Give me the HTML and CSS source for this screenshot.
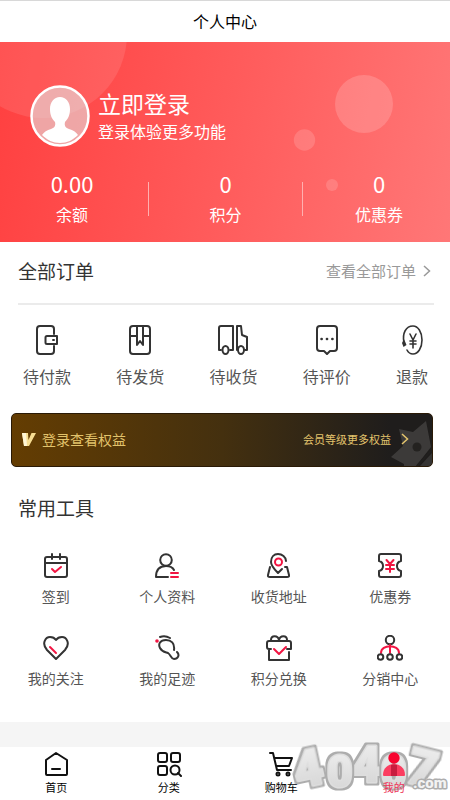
FILE: index.html
```html
<!DOCTYPE html>
<html lang="zh-CN">
<head>
<meta charset="utf-8">
<meta name="viewport" content="width=device-width, initial-scale=1">
<title>个人中心</title>
<link rel="stylesheet" href="styles.css">
</head>
<body>
<div class="page">
  <header class="topbar"><h1>个人中心</h1></header>

  <section class="hero">
    <svg class="bubbles" viewBox="0 0 450 200" preserveAspectRatio="xMidYMin slice" aria-hidden="true">
      <g fill="#fff">
        <circle cx="43" cy="-8" r="84" opacity=".1"/>
        <circle cx="364" cy="62" r="29" opacity=".17"/>
        <circle cx="304.500" cy="98" r="10.700" opacity=".15"/>
        <circle cx="332" cy="143" r="6" opacity=".15"/>
      </g>
    </svg>
    <a class="login" href="#">
      <svg class="avatar" viewBox="0 0 60 62" aria-hidden="true">
        <ellipse cx="30" cy="31" rx="28.500" ry="29.500" fill="#e4e4e4" fill-opacity=".6" stroke="#fff" stroke-width="2.500"/>
        <path d="M30 12c-6 0-10 5-10 12 0 6 2 10 5 13 1 4-1 6-4 7-4 1-7 3-9 6 5 5 11 8 18 8s13-3 18-8c-2-3-5-5-9-6-3-1-5-3-4-7 3-3 5-7 5-13 0-7-4-12-10-12z" fill="#fff"/>
      </svg>
      <span class="login-text">
        <strong>立即登录</strong>
        <span>登录体验更多功能</span>
      </span>
    </a>
    <div class="stats">
      <div class="stat"><b>0.00</b><span>余额</span></div>
      <i class="rule"></i>
      <div class="stat"><b>0</b><span>积分</span></div>
      <i class="rule"></i>
      <div class="stat"><b>0</b><span>优惠券</span></div>
    </div>
  </section>

  <section class="orders">
    <div class="orders-head">
      <h2>全部订单</h2>
      <a href="#">查看全部订单
        <svg class="chevron" viewBox="0 0 8 12" aria-hidden="true"><path d="M1 1l5.500 5L1 11"/></svg>
      </a>
    </div>
    <nav class="order-list">
      <a href="#">
        <svg class="ico" viewBox="0 0 30 30" aria-hidden="true"><path d="M22 9V4q0-3-3-3H8Q5 1 5 4v22q0 3 3 3h11q3 0 3-3v-5"/><path d="M15 11h10v8H15q-1.500 0-1.500-1.500v-5Q13.500 11 15 11z"/><path d="M21 15h1"/></svg>
        <span>待付款</span>
      </a>
      <a href="#">
        <svg class="ico" viewBox="0 0 30 30" aria-hidden="true"><rect x="5" y="1" width="20" height="28" rx="3"/><path d="M5 11h7m6 0h7M12 1v19l3-4 3 4V1"/></svg>
        <span>待发货</span>
      </a>
      <a href="#">
        <svg class="ico" viewBox="0 0 30 30" aria-hidden="true"><path d="M3 25H1V3q0-2 2-2h12v24h-3M19 25V1h4l1 9 5 2v13h-2"/><ellipse cx="7.500" cy="25" rx="3" ry="4"/><ellipse cx="23" cy="25" rx="3" ry="4"/></svg>
        <span>待收货</span>
      </a>
      <a href="#">
        <svg class="ico" viewBox="0 0 30 30" aria-hidden="true"><path d="M8 1h14q3 0 3 3v19q0 3-3 3h-4l-3 3-3-3H8q-3 0-3-3V4q0-3 3-3z"/><path d="M9.500 14h.2M14.900 14h.2M20.300 14h.2" stroke-width="2.500"/></svg>
        <span>待评价</span>
      </a>
      <a href="#">
        <svg class="ico thin" viewBox="0 0 30 30" aria-hidden="true"><path d="M7 18C5 8 9 1 16 1c5 0 9 6 9 14s-4 14-9 14q-4 0-6-4M13 9l3 6 3-6M13 16h6m-6 3h6m-3-4v8"/><path d="M7 14l2.500 6-3 2-1.500-4z" fill="#333" stroke="none"/></svg>
        <span>退款</span>
      </a>
    </nav>
  </section>

  <a class="vip" href="#">
    <svg class="crown" viewBox="0 0 42 48" aria-hidden="true"><path d="M9 11l14 3L36 3l5 26-15 19H14v-2L1 39l12-11z" fill="#fff" fill-opacity=".13"/><path d="M42 32L27 48" stroke="#211f1e" stroke-width="2"/><path d="M42 35v12l-3 1h-9z" fill="#fff" fill-opacity=".1"/><circle cx="27" cy="29" r="4.500" fill="#242220"/></svg>
    <svg class="vip-v" viewBox="0 0 14 15" aria-hidden="true"><path d="M0 1h6l.5 7L9.500 1H14L7 14H2z" fill="#f7dd92"/><path d="M0 1h4l1 13H2z" fill="#fff6d6"/></svg>
    <span class="vip-title">登录查看权益</span>
    <span class="vip-more">会员等级更多权益</span>
    <svg class="chevron gold" viewBox="0 0 8 12" aria-hidden="true"><path d="M1 1l5.500 5L1 11"/></svg>
  </a>

  <section class="tools">
    <h2>常用工具</h2>
    <nav class="tool-grid">
      <a href="#">
        <svg class="ico" viewBox="0 0 26 26" aria-hidden="true"><rect x="2" y="4" width="22" height="20" rx="2"/><path d="M2 10h22M9 1v5m8-5v5"/><path class="red" d="M9 16l3 3 6-5"/></svg>
        <span>签到</span>
      </a>
      <a href="#">
        <svg class="ico" viewBox="0 0 26 26" aria-hidden="true"><circle cx="12" cy="7" r="5.800"/><path d="M14 24H2q0-11 10-11 6 0 8 4"/><path class="red" d="M17 20h7m-7 4h7"/></svg>
        <span>个人资料</span>
      </a>
      <a href="#">
        <svg class="ico" viewBox="0 0 26 26" aria-hidden="true"><path d="M16 16l-4 4c-5-5-7-8-7-11 0-5 3-8 7-8s8 3 8 7M4 14L2 22q-.5 2 2 2h17q2.500 0 2-2L21 14h-2"/><circle class="red" cx="12.500" cy="9" r="3.500"/></svg>
        <span>收货地址</span>
      </a>
      <a href="#">
        <svg class="ico" viewBox="0 0 26 26" aria-hidden="true"><path d="M4 1h18q2 0 2 2v5q-4 1-4 5t4 5v4q0 2-2 2H4q-2 0-2-2v-4q4-1 4-5T2 8V3q0-2 2-2z"/><path class="red" d="M9.500 7l3.500 4 3.500-4M9 12h8m-8 4h8m-4-5v8"/></svg>
        <span>优惠券</span>
      </a>
      <a href="#">
        <svg class="ico" viewBox="0 0 26 26" aria-hidden="true"><path d="M13 24L4 15C-2 8 3 2 7 2q4 0 6 3 2-3 6-3c4 0 9 6 3 13z"/><path class="red" d="M7 12l6 6"/></svg>
        <span>我的关注</span>
      </a>
      <a href="#">
        <svg class="ico" viewBox="0 0 26 26" aria-hidden="true"><path d="M6 2q5-2 10 1M20 15C21 8 17 5 12 5c-6 0-8 4-6 8 2 4 5 4 8 5 3 2 3 6 6 6 4 0 6-4 3-7"/><circle cx="3" cy="6" r="1.800" fill="#f21542" stroke="none"/></svg>
        <span>我的足迹</span>
      </a>
      <a href="#">
        <svg class="ico" viewBox="0 0 26 26" aria-hidden="true"><path d="M5 14H3q-2 0-2-2V8q0-2 2-2h20q2 0 2 2v6h-4M3 14v11h20v-8M5 5c0-5 7-5 8 0 1-5 8-5 8 0"/><path class="red" d="M8 14l5 5 7-7"/></svg>
        <span>积分兑换</span>
      </a>
      <a href="#">
        <svg class="ico" viewBox="0 0 26 26" aria-hidden="true"><circle cx="13" cy="5" r="4.200"/><path class="red" d="M4 18c0-9 18-9 18 0M13 10v8"/><circle cx="3.500" cy="22" r="2.800"/><circle cx="13" cy="22" r="2.800"/><circle cx="22.500" cy="22" r="2.800"/></svg>
        <span>分销中心</span>
      </a>
    </nav>
  </section>

  <nav class="tabbar">
    <svg class="mark" viewBox="0 0 160 56" aria-label="4o4o7.com" role="img">
      <defs>
        <linearGradient id="silver" x1="0" y1="0" x2="0" y2="1"><stop offset="0" stop-color="#f0f0f0"/><stop offset="1" stop-color="#d2d2d2"/></linearGradient>
        <filter id="rim" x="-20%" y="-20%" width="140%" height="140%">
          <feMorphology in="SourceAlpha" operator="dilate" radius="2" result="fat"/>
          <feFlood flood-color="#adadad"/>
          <feComposite in2="fat" operator="in" result="edge"/>
          <feMerge><feMergeNode in="edge"/><feMergeNode in="SourceGraphic"/></feMerge>
        </filter>
      </defs>
      <g class="mark-big" fill="url(#silver)">
        <text x="4" y="42" transform="rotate(-12 18 26)" filter="url(#rim)">4</text>
        <text x="62" y="38" filter="url(#rim)">4</text>
        <text x="37" y="43" class="mark-o" filter="url(#rim)">0</text>
        <text x="91" y="43" class="mark-o" filter="url(#rim)">0</text>
        <text x="118" y="41" transform="rotate(14 130 24)" filter="url(#rim)">7</text>
      </g>
      <text class="mark-small" x="123" y="44">.com</text>
    </svg>
    <a href="#">
      <svg class="ico" viewBox="0 0 26 26" aria-hidden="true"><path d="M3 9l10-7 11 7v14q0 1-1 1H4q-1 0-1-1zM9 18h8"/></svg>
      <span>首页</span>
    </a>
    <a href="#">
      <svg class="ico" viewBox="0 0 26 26" aria-hidden="true"><rect x="2" y="2" width="9" height="9" rx="2"/><rect x="15" y="2" width="9" height="9" rx="2"/><rect x="2" y="15" width="9" height="9" rx="2"/><circle cx="19" cy="19" r="4.500"/><path d="M22 22l3 3"/></svg>
      <span>分类</span>
    </a>
    <a href="#">
      <svg class="ico" viewBox="0 0 26 26" aria-hidden="true"><path d="M2 2h3l4 17h14M6 7h18l-3 8H9"/><circle cx="10" cy="23" r="1.500"/><circle cx="20" cy="23" r="1.500"/></svg>
      <span>购物车</span>
    </a>
    <a class="active" href="#" aria-current="page">
      <svg class="ico" viewBox="0 0 26 26" aria-hidden="true"><circle cx="13" cy="7" r="5.700" fill="#f7042f" stroke="none"/><path d="M2 24c0-7 5-11 11-11s11 4 11 11q0 1-1 1H3q-1 0-1-1z" fill="#fb3d60" stroke="none"/><path d="M10 14q3-1 6 0v11h-6z" fill="#c81d3f" stroke="none"/></svg>
      <span>我的</span>
    </a>
  </nav>
</div>
</body>
</html>
```

FILE: styles.css
```css
* {
  box-sizing: border-box;
}

body {
  margin: 0;
  background: #fff;
  color: #333;
  font-family: "Noto Sans CJK SC", "Noto Sans", sans-serif;
  font-size: 16px;
  line-height: 20px;
}

a {
  color: inherit;
  text-decoration: none;
}

h1,
h2 {
  margin: 0;
  font-weight: 400;
}

svg {
  display: block;
  flex: none;
}

.page {
  display: flex;
  flex-direction: column;
  min-height: 100vh;
}

.topbar {
  padding: 10px 0 11px;
  border-top: 1px solid #d8d8d8;
  color: #000;
  text-align: center;
}

.topbar h1 {
  font-size: 16px;
}

/* Account summary */
.hero {
  position: relative;
  overflow: hidden;
  padding: 43px 0 18px;
  background: linear-gradient(100deg, #ff4040, #ff5b5b 50%, #ff7777);
  color: #fff;
}

.bubbles {
  position: absolute;
  inset: 0;
  width: 100%;
  height: 100%;
}

.login {
  position: relative;
  display: flex;
  align-items: center;
  gap: 8px;
  padding-left: 30px;
}

.avatar {
  width: 60px;
  height: 62px;
}

.login-text {
  display: flex;
  flex-direction: column;
  gap: 4px;
  padding-bottom: 2px;
}

.login-text strong {
  font-size: 23px;
  font-weight: 400;
  line-height: 28px;
}

.stats {
  position: relative;
  display: flex;
  justify-content: space-between;
  align-items: center;
  margin-top: 22px;
  padding: 0 47px 0 48px;
}

.stat {
  display: flex;
  flex-direction: column;
  align-items: center;
  gap: 7px;
  width: 48px;
}

.stat b {
  font-size: 22px;
  font-weight: 400;
  line-height: 28px;
}

.rule {
  width: 1px;
  height: 34px;
  margin-top: 4px;
  background: #ffb0b0;
}

/* Orders */
.orders-head {
  display: flex;
  justify-content: space-between;
  align-items: center;
  margin: 0 16px 0 18px;
  padding: 15px 3px 18px 0;
  border-bottom: 2px solid #ebebeb;
}

h2 {
  font-size: 19px;
  line-height: 28px;
}

.orders-head a {
  display: flex;
  align-items: center;
  gap: 7px;
  color: #999;
  font-size: 15px;
}

.chevron {
  width: 8px;
  height: 12px;
  fill: none;
  stroke: #999;
  stroke-width: 1.5;
}

.ico {
  width: 26px;
  height: 26px;
  fill: none;
  stroke: #333;
  stroke-width: 2;
  stroke-linecap: round;
  stroke-linejoin: round;
}

.ico .red {
  stroke: #f21542;
}

.ico.thin {
  stroke-width: 1.6;
}

.order-list {
  display: flex;
  justify-content: space-between;
  padding: 20px 22px 0 23px;
}

.order-list a {
  display: flex;
  flex-direction: column;
  align-items: center;
  gap: 11px;
  color: #555;
}

.order-list .ico {
  width: 30px;
  height: 30px;
}

/* Membership banner */
.vip {
  position: relative;
  display: flex;
  align-items: center;
  height: 54px;
  margin: 27px 17px 0 11px;
  padding: 0 23px 2px 10px;
  overflow: hidden;
  border: 1px solid #2a1a06;
  border-radius: 5px;
  background: linear-gradient(90deg, #643d02, #44300f 50%, #1f1d1c 90%);
  color: #e2c36c;
}

.crown {
  position: absolute;
  right: 0;
  bottom: 0;
  width: 42px;
  height: 48px;
}

.vip-v {
  width: 14px;
  height: 15px;
  margin-right: 6px;
}

.vip-title {
  font-size: 14px;
}

.vip-more {
  position: relative;
  margin-left: auto;
  margin-right: 10px;
  font-size: 11px;
}

.gold {
  position: relative;
  stroke: #e2c36c;
}

/* Tools */
.tools {
  padding: 27px 0 34px;
}

.tools h2 {
  padding-left: 18px;
}

.tool-grid {
  display: grid;
  grid-template-columns: repeat(4, 1fr);
  row-gap: 29px;
  padding: 31px 4px 0 0;
}

.tool-grid a {
  display: flex;
  flex-direction: column;
  align-items: center;
  gap: 7px;
  color: #555;
  font-size: 14px;
}

/* Bottom navigation */
.tabbar {
  position: relative;
  display: grid;
  grid-template-columns: repeat(4, 1fr);
  margin-top: auto;
  padding: 4px 0 3px;
  border-top: 25px solid #f5f5f5;
  color: #000;
  font-size: 11px;
}

.tabbar a {
  position: relative;
  display: flex;
  flex-direction: column;
  align-items: center;
}

.tabbar .ico {
  stroke: #111;
}

.tabbar .active {
  color: #ee3558;
}

.mark {
  position: absolute;
  right: 0;
  bottom: 0;
  width: 160px;
  height: 56px;
  overflow: visible;
}

.mark text {
  font-family: Roboto, "Liberation Sans", sans-serif;
  font-weight: 900;
  stroke-linejoin: round;
  paint-order: stroke;
}

.mark-big {
  font-size: 50px;
  stroke: #dedede;
  stroke-width: 3;
}

.mark .mark-o {
  font-size: 44px;
}

.mark .mark-small {
  fill: #f2f2f2;
  stroke: #adadad;
  font-size: 15px;
  stroke-width: 3;
}
```
